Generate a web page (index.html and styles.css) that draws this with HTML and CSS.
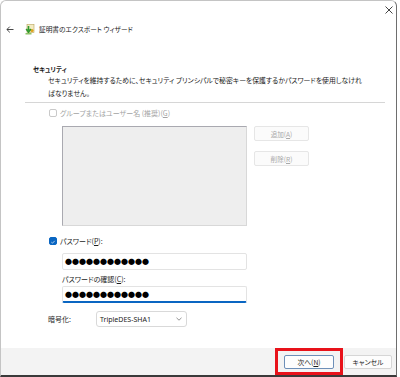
FILE: index.html
```html
<html>
<head>
  <meta charset="utf-8">
  <link rel="stylesheet" href="styles.css">
</head>
<body>
  <div class="window">
    <div class="caption">
      <svg class="close" width="8" height="8" viewBox="0 0 8 8"><path d="M0.5 0.5 L7.5 7.5 M7.5 0.5 L0.5 7.5" stroke="#444" stroke-width="1"/></svg>
    </div>
    <div class="header">
      <svg class="back" width="8" height="7" viewBox="0 0 8 7"><path d="M7.5 3.5 H1 M3.8 0.6 L0.9 3.5 L3.8 6.4" fill="none" stroke="#333" stroke-width="0.9"/></svg>
      <svg class="certicon" width="10" height="11" viewBox="0 0 10 11">
        <rect x="2" y="0.5" width="7" height="8" fill="#f4ecc2" stroke="#b9a45a" stroke-width="0.6"/>
        <circle cx="7" cy="6.5" r="1.6" fill="#e0a21c"/>
        <path d="M3.5 2 V6.5 M1.2 5 L3.5 8.2 L5.8 5" fill="none" stroke="#2f9a2f" stroke-width="1.6"/>
        <rect x="0.5" y="9" width="6" height="1.5" fill="#8fc46a"/>
      </svg>
      <span class="title">証明書のエクスポート ウィザード</span>
    </div>

    <div class="content">
      <div class="heading">セキュリティ</div>
      <div class="desc">セキュリティを維持するために、セキュリティ プリンシパルで秘密キーを保護するかパスワードを使用しなけれ<br>ばなりません。</div>
      <div class="rule"></div>

      <div class="form">
        <div class="checkrow disabled">
          <span class="box"></span>
          <span>グループまたはユーザー名 (推奨)(<u>G</u>)</span>
        </div>
        <div class="listarea">
          <div class="listbox"></div>
          <div class="sidebtns">
            <div class="btn off">追加(<u>A</u>)</div>
            <div class="btn off">削除(<u>R</u>)</div>
          </div>
        </div>

        <div class="checkrow">
          <span class="box on">
            <svg width="8" height="8" viewBox="0 0 8 8"><path d="M1.8 4.2 L3.3 5.6 L6.3 2.4" fill="none" stroke="#fff" stroke-width="0.9"/></svg>
          </span>
          <span>パスワード(<u>P</u>):</span>
        </div>
        <div class="field">●●●●●●●●●●●●</div>
        <div class="label">パスワードの確認(<u>C</u>):</div>
        <div class="field focus">●●●●●●●●●●●●</div>

        <div class="encrow">
          <span class="enclabel">暗号化:</span>
          <div class="select">
            <span>TripleDES-SHA1</span>
            <svg width="6" height="4" viewBox="0 0 6 4"><path d="M0.5 0.8 L3 3.2 L5.5 0.8" fill="none" stroke="#666" stroke-width="0.7"/></svg>
          </div>
        </div>
      </div>
    </div>

    <div class="footer">
      <div class="fbtn primary">次へ(<u>N</u>)</div>
      <div class="fbtn">キャンセル</div>
      <div class="highlight"></div>
    </div>
  </div>
</body>
</html>
```

FILE: styles.css
```css
html, body {
  margin: 0;
  padding: 0;
  background: #ffffff;
  font-family: "Noto Sans CJK JP", "Noto Sans", sans-serif;
  color: #1b1b1b;
}
.window {
  width: 395px;
  height: 374px;
  border: 1px solid #c4c4c4;
  border-right-color: #6e6e6e;
  border-bottom: 2px solid #3a3a3a;
  border-top-left-radius: 6px;
  border-top-right-radius: 6px;
  display: flex;
  flex-direction: column;
  background: #ffffff;
  font-feature-settings: "palt";
}
.caption {
  height: 17px;
  display: flex;
  justify-content: flex-end;
  align-items: center;
  padding-right: 3px;
}
.header {
  height: 22px;
  display: flex;
  align-items: center;
  padding-left: 5px;
}
.back {
  margin-right: 11px;
}
.certicon {
  margin-right: 4px;
}
.title {
  font-size: 6.7px;
  color: #222;
}
.content {
  padding-top: 26px;
  padding-left: 24px;
  flex: 1;
}
.heading {
  font-size: 6.4px;
  font-weight: bold;
  line-height: 8px;
  padding-left: 8px;
}
.desc {
  font-size: 6.85px;
  line-height: 13px;
  padding-left: 23px;
}
.rule {
  margin-top: 2px;
  width: 360px;
  height: 1px;
  background: #d6d6d6;
}
.form {
  padding-left: 24px;
}
.checkrow {
  display: flex;
  align-items: center;
  height: 10px;
  margin-top: 5px;
  font-size: 7px;
}
.checkrow.disabled {
  color: #a3a3a3;
}
.box {
  width: 8px;
  height: 8px;
  border: 1px solid #c9c9c9;
  border-radius: 2px;
  margin-right: 3px;
  display: flex;
  box-sizing: border-box;
}
.box.on {
  background: #0a66c2;
  border-color: #0a66c2;
}
.listarea {
  display: flex;
  margin-top: 8px;
  padding-left: 13px;
}
.listbox {
  width: 185px;
  height: 100px;
  box-sizing: border-box;
  background: #eeeeee;
  border: 1px solid #d8d8d8;
  border-top-color: #a9a9b0;
  border-left-color: #a9a9b0;
}
.sidebtns {
  margin-left: 7px;
  display: flex;
  flex-direction: column;
  gap: 10px;
}
.btn {
  width: 55px;
  height: 15px;
  box-sizing: border-box;
  border: 1px solid #e6e6e6;
  border-radius: 2px;
  background: #fbfbfb;
  font-size: 6.6px;
  display: flex;
  align-items: center;
  justify-content: center;
}
.btn.off {
  color: #a8a8a8;
}
.checkrow + .field {
  margin-top: 7px;
}
.checkrow:not(.disabled) {
  margin-top: 10px;
}
.field {
  margin-left: 13px;
  width: 185px;
  height: 17px;
  box-sizing: border-box;
  border: 1px solid #e3e3e3;
  border-radius: 2px;
  padding-left: 2px;
  font-size: 7px;
  line-height: 15px;
  color: #000;
  font-feature-settings: normal;
}
.field.focus {
  border-bottom: 2px solid #0a66c2;
  margin-top: 1px;
}
.label {
  margin-left: 13px;
  margin-top: 3px;
  height: 12px;
  font-size: 7px;
  line-height: 12px;
}
.encrow {
  display: flex;
  align-items: center;
  margin-top: 8px;
  margin-left: -1px;
}
.enclabel {
  font-size: 7px;
  width: 48px;
}
.select {
  width: 91px;
  height: 16px;
  box-sizing: border-box;
  border: 1px solid #d9d9d9;
  border-radius: 3px;
  display: flex;
  align-items: center;
  justify-content: space-between;
  padding: 0 4px 0 3px;
  font-family: "Noto Sans", sans-serif;
  font-size: 7px;
}
.footer {
  position: relative;
  height: 27px;
  background: #f3f3f3;
  display: flex;
  justify-content: flex-end;
  align-items: center;
  gap: 10px;
  padding-right: 4px;
}
.fbtn {
  width: 48px;
  height: 14px;
  box-sizing: border-box;
  border: 1px solid #d6d6d6;
  border-radius: 2px;
  background: #fdfdfd;
  font-size: 6.8px;
  display: flex;
  align-items: center;
  justify-content: center;
}
.fbtn.primary {
  width: 50px;
  border-color: #6d8fb8;
}
.highlight {
  position: absolute;
  left: 274px;
  top: 0px;
  width: 62px;
  height: 21px;
  border: 3px solid #e8121a;
}
u {
  text-underline-offset: 1px;
}
```
